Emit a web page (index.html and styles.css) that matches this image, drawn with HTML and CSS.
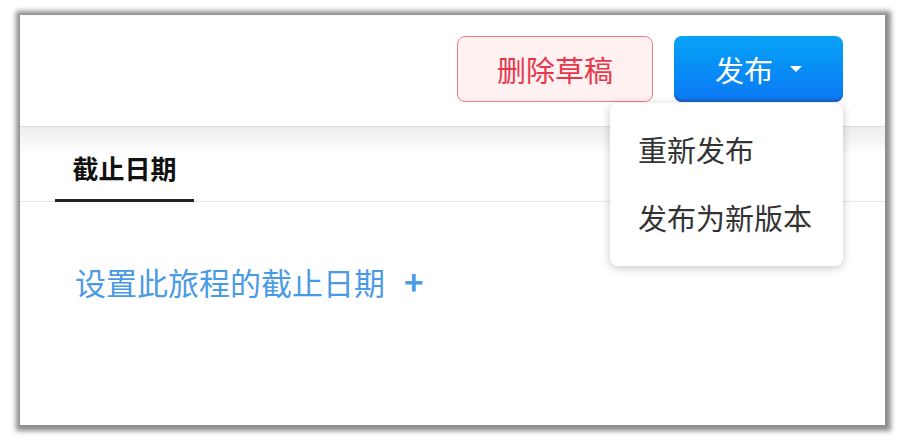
FILE: index.html
```html
<!DOCTYPE html>
<html lang="zh-CN">
<head>
  <meta charset="UTF-8">
  <title>截止日期</title>
  <link rel="stylesheet" href="styles.css">
</head>
<body>
  <div class="frame">
    <!-- 顶部操作栏 -->
    <header class="toolbar">
      <button class="btn btn-delete" type="button">删除草稿</button>
      <div class="publish">
        <button class="btn btn-publish" type="button">发布 <span class="caret"></span></button>
        <ul class="menu">
          <li>重新发布</li>
          <li>发布为新版本</li>
        </ul>
      </div>
    </header>

    <!-- 标签页 -->
    <nav class="tabs">
      <div class="tab active">截止日期</div>
    </nav>

    <main class="content">
      <a class="add-link" href="#">设置此旅程的截止日期 <span class="plus">+</span></a>
    </main>
  </div>
</body>
</html>
```

FILE: styles.css
```css
/* 截图外框 */
html, body {
  height: 440px;
}
body {
  margin: 0;
  background: #fff;
  font-family: "Noto Sans CJK SC", "Noto Sans", sans-serif;
  padding-top: 15px;
  box-sizing: border-box;
}
.frame {
  margin-left: 20px;
  width: 865px;
  height: 410px;
  background: #fff;
  box-shadow: 1px 1px 5px 5px rgba(0,0,0,0.45);
  display: flex;
  flex-direction: column;
}
.toolbar {
  height: 112px;
  box-sizing: border-box;
  padding: 21px 42px 0 0;
  display: flex;
  justify-content: flex-end;
  align-items: flex-start;
  gap: 21px;
  border-bottom: 1px solid #dcdcdc;
}
.btn {
  height: 66px;
  border-radius: 8px;
  font-family: inherit;
  font-size: 29px;
  cursor: pointer;
  padding: 0;
}
.btn-delete {
  width: 196px;
  background: #fff1f2;
  border: 1px solid #f47a86;
  color: #e8374a;
}
.publish {
  position: relative;
}
.btn-publish {
  width: 169px;
  border: none;
  color: #fff;
  background: linear-gradient(#07a3f6, #0b78f5);
  box-shadow: inset 0 -3px 0 #1a67c8;
  display: flex;
  align-items: center;
  justify-content: center;
  gap: 17px;
}
.caret {
  width: 0;
  height: 0;
  border-left: 6px solid transparent;
  border-right: 6px solid transparent;
  border-top: 6px solid #fff;
}
.menu {
  position: absolute;
  top: 67px;
  right: 0;
  width: 233px;
  margin: 0;
  padding: 12px 0 15px;
  list-style: none;
  background: #fff;
  border-radius: 8px;
  box-shadow: 0 2px 10px rgba(0,0,0,0.22);
  z-index: 2;
}
.menu li {
  height: 68px;
  line-height: 68px;
  padding-left: 28px;
  font-size: 29px;
  color: #333;
}
.tabs {
  height: 75px;
  box-sizing: border-box;
  padding-left: 35px;
  display: flex;
  align-items: flex-end;
  background: linear-gradient(#ededed, #fff 28px);
  border-bottom: 1px solid #e6e6e6;
}
.tab {
  width: 139px;
  text-align: center;
  font-size: 26px;
  font-weight: bold;
  color: #111;
  padding-bottom: 13px;
  margin-bottom: -1px;
}
.tab.active {
  border-bottom: 3px solid #222;
}
.content {
  padding: 55px 0 0 55px;
}
.add-link {
  font-size: 31px;
  color: #4a9be6;
  text-decoration: none;
}
.plus {
  font-size: 33px;
  font-weight: bold;
  margin-left: 12px;
}
```
